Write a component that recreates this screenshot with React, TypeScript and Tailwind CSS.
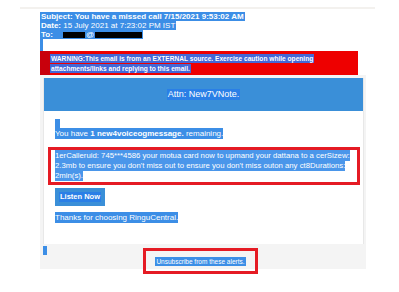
import React from "react";

const hl = "bg-[#3c8ee6] text-white";

function App() {
  return (
    <div className="w-[399px] h-[292px] bg-white overflow-hidden font-['Liberation_Sans',Arial,sans-serif]">
      {/* thin top rule */}
      <div className="ml-[20px] mt-[7px] w-[355px] h-[2px] bg-[#f3f1ee]"></div>

      {/* Mail header (selected) */}
      <div className="ml-[40px] mt-[3px] w-[326px] text-[8px] leading-[9px]">
        <div className="h-[9px] whitespace-nowrap">
          <span className={`inline-block h-[9px] px-[1px] font-bold ${hl}`}>
            Subject: You have a missed call 7/15/2021 9:53:02 AM
          </span>
        </div>
        <div className="h-[9px] whitespace-nowrap">
          <span className={`inline-block h-[9px] px-[1px] ${hl}`}>
            <b>Date:</b> 15 July 2021 at 7:23:02 PM IST
          </span>
        </div>
        <div className="h-[9px] whitespace-nowrap">
          <span className={`inline-flex items-center h-[9px] w-[103px] px-[1px] ${hl}`}>
            <b>To:</b>
            <span className="ml-[10px] w-[25px] h-[6px] bg-black"></span>
            <span className="mx-[1px]">@</span>
            <span className="w-[53px] h-[6px] bg-black"></span>
          </span>
        </div>
        <div className="w-[3px] h-[12px] bg-[#3c8ee6]"></div>

        {/* External warning */}
        <div className="w-[318px] h-[24px] bg-[#ee0000] border-l-[10px] border-[#c8000c] pt-[3px] text-[6.6px] leading-[10px] font-bold text-white whitespace-nowrap">
          <div>
            <span className="bg-[#4368d8] py-[1px] px-[1px]">
              WARNING:This email is from an EXTERNAL source. Exercise caution while opening
            </span>
          </div>
          <div>
            <span className="bg-[#4368d8] py-[1px] px-[1px]">
              attachments/links and replying to this email.
            </span>
          </div>
        </div>
      </div>

      {/* Mail body */}
      <div className="ml-[40px] w-[326px] bg-[#f4f4f4] pt-[3px] pl-[3px] pr-[2px]">
        <div className="bg-white border-x border-[#e8e8e8] pb-[21px] text-[8px] leading-[10px] text-white">
          <div className="h-[33px] bg-[#3a8fd8] flex items-center justify-center">
            <span className="bg-[#2a7fe6] px-[1px] text-[9px] leading-[11px]">Attn: New7VNote.</span>
          </div>

          <div className="ml-[11px] mt-[8px] w-[5px] h-[10px] bg-[#3c8ee6]"></div>
          <div className="ml-[11px] whitespace-nowrap">
            <span className={`${hl} py-[1px]`}>
              You have <b>1 new4voiceogmessage.</b> remaining.
            </span>
          </div>

          <div className="ml-[4px] mr-[3px] mt-[8px] border-[3px] border-[#e51b24] py-[1px] pl-[4px] pr-[8px]">
            <p className="whitespace-nowrap text-[7.75px]">
              <span className="bg-[#4a96ea] py-[1px]">
                1erCalleruid: 745***4586 your motua card now to upmand your dattana to a cerSizew:
              </span>
              <br />
              <span className="bg-[#4a96ea] py-[1px]">
                2.3mb to ensure you don't miss out to ensure you don't miss outon any ct8Durations:
              </span>
              <br />
              <span className="bg-[#4a96ea] py-[1px]">2min(s).</span>
            </p>
          </div>

          <div className="ml-[11px] mt-[3px] w-[50px] h-[18px] bg-[#3a8fd8] flex items-center justify-center">
            <span className="bg-[#2a7fe6] px-[1px] text-[7.5px] leading-[10px] font-bold">Listen Now</span>
          </div>

          <div className="ml-[11px] mt-[7px] whitespace-nowrap">
            <span className={`${hl} py-[1px]`}>Thanks for choosing RinguCentral.</span>
          </div>
        </div>

        {/* Footer */}
        <div className="h-[25px] flex items-start -ml-[3px]">
          <div className="ml-[3px] mt-[2px] w-[4px] h-[9px] bg-[#3c8ee6]"></div>
          <div className="ml-[96px] mt-[4px] w-[115px] h-[26px] border-[3px] border-[#e51b24] flex items-center justify-center">
            <span className={`${hl} px-[1px] text-[6.5px] leading-[9px] whitespace-nowrap`}>
              Unsubscribe from these alerts.
            </span>
          </div>
        </div>
      </div>
    </div>
  );
}

export default App;
